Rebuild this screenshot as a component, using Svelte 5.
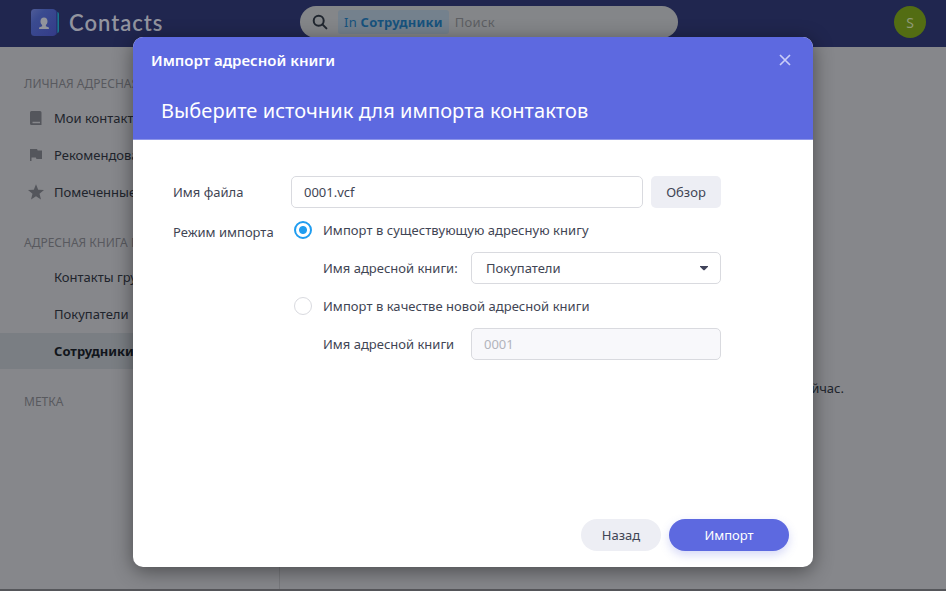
<script>
  const shortcuts = [
    { icon: 'book', label: 'Мои контакты' },
    { icon: 'flag', label: 'Рекомендованные' },
    { icon: 'star', label: 'Помеченные' }
  ];
  const books = ['Контакты группы', 'Покупатели', 'Сотрудники'];
  const activeBook = 'Сотрудники';
  let mode = $state('existing');
  let fileName = $state('0001.vcf');
</script>

<div class="app">
  <header>
    <div class="brand">
      <svg width="30" height="30" viewBox="0 0 30 30">
        <defs>
          <linearGradient id="cover" x1="0" y1="0" x2="1" y2="1">
            <stop offset="0" stop-color="#4f5c98" />
            <stop offset=".3" stop-color="#3a4b90" />
            <stop offset="1" stop-color="#343b88" />
          </linearGradient>
        </defs>
        <rect x="10" y="4" width="19" height="21" rx="2" fill="#17788c" />
        <rect x="9" y="2" width="18.500" height="25" rx="3" fill="#2a3375" />
        <rect x="1" y="1" width="25" height="27" rx="3.500" fill="url(#cover)" />
        <path d="M14 9.500c-2.200 0-3.500 1.500-3.500 3.700 0 1.600.6 3 1.600 3.800v1.300l-3 1.200V21h9.800v-1.500l-3-1.200V17c1-.8 1.600-2.200 1.600-3.800 0-2.200-1.300-3.700-3.500-3.700z" fill="#92949c" />
      </svg>
      <span>Contacts</span>
    </div>
    <div class="search">
      <svg width="16" height="16" viewBox="0 0 16 16" fill="none" stroke="#20262f" stroke-width="2">
        <circle cx="6.700" cy="6.700" r="5" /><path d="M10.400 10.400l4 4" stroke-linecap="round" />
      </svg>
      <span class="chip">In <b>Сотрудники</b></span>
      <span class="hint">Поиск</span>
    </div>
    <div class="avatar">S</div>
  </header>

  <div class="body">
    <nav>
      <h2>ЛИЧНАЯ АДРЕСНАЯ КНИГА</h2>
      {#each shortcuts as item}
        <div class="item">
          <svg width="18" height="18" viewBox="0 0 18 18" fill="#54565c">
            {#if item.icon === 'book'}
              <path fill-rule="evenodd" d="M4.500 2h8.500a1.500 1.500 0 0 1 1.500 1.500V16h-10A1.500 1.500 0 0 1 3 14.500v-11A1.500 1.500 0 0 1 4.500 2zM5.500 12.700v1.500H13v-1.500z" />
            {:else if item.icon === 'flag'}
              <path d="M3 3h7l.7 1.500H15v8.500H9.500L8.800 11.600H4.500V15H3z" />
            {:else}
              <path d="M9 1.200l2.200 5.500 5.800.3-4.500 3.700 1.500 5.800L9 13.300l-5 3.200 1.500-5.800L1 7l5.800-.3z" />
            {/if}
          </svg>
          <span>{item.label}</span>
        </div>
      {/each}
      <h2 class="second">АДРЕСНАЯ КНИГА ГРУППЫ</h2>
      {#each books as book}
        <div class="item book" class:active={book === activeBook}>{book}</div>
      {/each}
      <h2 class="third">МЕТКА</h2>
    </nav>
    <main><p>Контактов нет. Добавьте их прямо сейчас.</p></main>
  </div>
  <div class="edge"></div>

  <section class="dialog">
    <div class="top">
      <div class="title">
        <span>Импорт адресной книги</span>
        <svg width="12" height="12" viewBox="0 0 12 12" fill="none" stroke="#c9cdf7" stroke-width="1.700"><path d="M1 1l10 10M11 1L1 11" /></svg>
      </div>
      <h1>Выберите источник для импорта контактов</h1>
    </div>
    <div class="form">
      <div class="row">
        <span class="label">Имя файла</span>
        <input class="file" bind:value={fileName} />
        <button class="browse">Обзор</button>
      </div>
      <div class="modes">
        <span class="label modelabel">Режим импорта</span>
        <div class="options">
          <label class="option"><input type="radio" bind:group={mode} value="existing" /><span>Импорт в существующую адресную книгу</span></label>
          <div class="sub">
            <span>Имя адресной книги:</span>
            <div class="select">Покупатели
              <svg width="8" height="5" viewBox="0 0 8 5"><path d="M0 0h8v.7L4.500 4.200h-1L0 .7z" fill="#40435a" /></svg>
            </div>
          </div>
          <label class="option"><input type="radio" bind:group={mode} value="new" /><span>Импорт в качестве новой адресной книги</span></label>
          <div class="sub">
            <span>Имя адресной книги</span>
            <input class="newname" value="0001" disabled />
          </div>
        </div>
      </div>
    </div>
    <footer>
      <button class="back">Назад</button>
      <button class="primary">Импорт</button>
    </footer>
  </section>
</div>

<style>
  * { box-sizing: border-box; }
  .app { position: relative; display: flex; flex-direction: column; width: 946px; height: 591px; overflow: hidden; background: #86878b; color: #3f4554; font: 13px/20px "Noto Sans", "Open Sans", sans-serif; }
  header { display: flex; height: 47px; flex: none; background: #20264f; align-items: flex-start; }
  .brand { display: flex; width: 300px; padding: 8px 0 0 30px; gap: 9px; color: #92949f; }
  .brand span { font: 600 22px/29px Lato, sans-serif; letter-spacing: 1px; }
  .search { display: flex; align-items: center; width: 378px; height: 32px; margin-top: 6px; padding-left: 12px; border-radius: 16px; background: #848689; }
  .chip { height: 24px; margin-left: 10px; padding: 0 6px; line-height: 24px; border-radius: 3px; background: #74818d; color: #17527d; white-space: nowrap; letter-spacing: .23px; }
  .hint { margin-left: 6px; color: #5d5f63; letter-spacing: .3px; }
  .avatar { width: 32px; height: 32px; margin: 6px 0 0 216px; border-radius: 50%; background: #536d13; color: #909b78; text-align: center; font-size: 14px; line-height: 34px; }
  .body { display: flex; flex: 1; }
  nav { width: 280px; padding-top: 27px; border-right: 1px solid #78797d; white-space: nowrap; }
  h2 { margin: 0 0 6px 24px; font-size: 12px; line-height: 20px; font-weight: 400; color: #58595e; }
  .item { display: flex; align-items: center; height: 36px; margin-bottom: 1px; padding-left: 27px; color: #20242c; }
  .item span { margin-left: 9px; }
  .second { margin-top: 23px; }
  .book { padding-left: 54px; }
  .active { font-weight: 700; background: #7a7e83; color: #11151b; }
  .third { margin-top: 23px; }
  main { flex: 1; padding: 331px 102px 0 0; text-align: right; color: #20242c; }
  p { margin: 0; }
  .edge { height: 2px; background: #55565a; }
  .dialog { position: absolute; left: 133px; top: 37px; display: flex; flex-direction: column; width: 680px; height: 530px; border-radius: 10px; overflow: hidden; background: #fff; box-shadow: 0 4px 20px rgba(0, 0, 0, .45); }
  .top { height: 103px; flex: none; background: #5d69e0; border-bottom: 1px solid #8d95e8; color: #fff; }
  .title { display: flex; align-items: center; justify-content: space-between; height: 46px; padding: 0 22px 0 18px; font-size: 15px; font-weight: 600; }
  h1 { margin: 13px 0 0 28px; font-size: 20px; line-height: 30px; font-weight: 400; letter-spacing: .07px; white-space: nowrap; }
  .form { flex: 1; padding: 36px 0 0 40px; }
  .row { display: flex; align-items: center; }
  .label { width: 118px; flex: none; }
  input, button, .select { height: 32px; font: inherit; color: inherit; }
  .file, .newname, .select { border: 1px solid #d9dadf; border-radius: 5px; background: #fff; padding: 0 12px; }
  .file { width: 352px; }
  button { border: 0; padding: 0; background: #edeef4; }
  .browse { width: 70px; margin-left: 8px; border-radius: 5px; }
  .modes { display: flex; margin-top: 12px; }
  .modelabel { padding-top: 2px; white-space: nowrap; }
  .option { display: flex; height: 20px; align-items: center; padding-left: 3px; white-space: nowrap; letter-spacing: .04px; }
  .option input { appearance: none; width: 18px; height: 18px; margin: 0 11px 0 0; border: 1px solid #d9dadf; border-radius: 50%; background: #fff; }
  .option input:checked { border: 2px solid #209df0; background: radial-gradient(circle, #209df0 3.500px, #fff 4.500px); }
  .sub { display: flex; align-items: center; height: 32px; margin: 12px 0; padding-left: 32px; }
  .sub > span { width: 148px; white-space: nowrap; }
  .select { display: flex; width: 250px; align-items: center; justify-content: space-between; padding-left: 14px; }
  .newname { width: 250px; background: #f8f8fb; color: #b2b4bc; }
  footer { display: flex; justify-content: flex-end; height: 48px; gap: 8px; padding-right: 24px; }
  footer button { border-radius: 16px; }
  .back { width: 80px; }
  .primary { width: 120px; background: #5d69e0; color: #fff; box-shadow: 0 4px 10px rgba(93, 105, 224, .25); }
</style>
